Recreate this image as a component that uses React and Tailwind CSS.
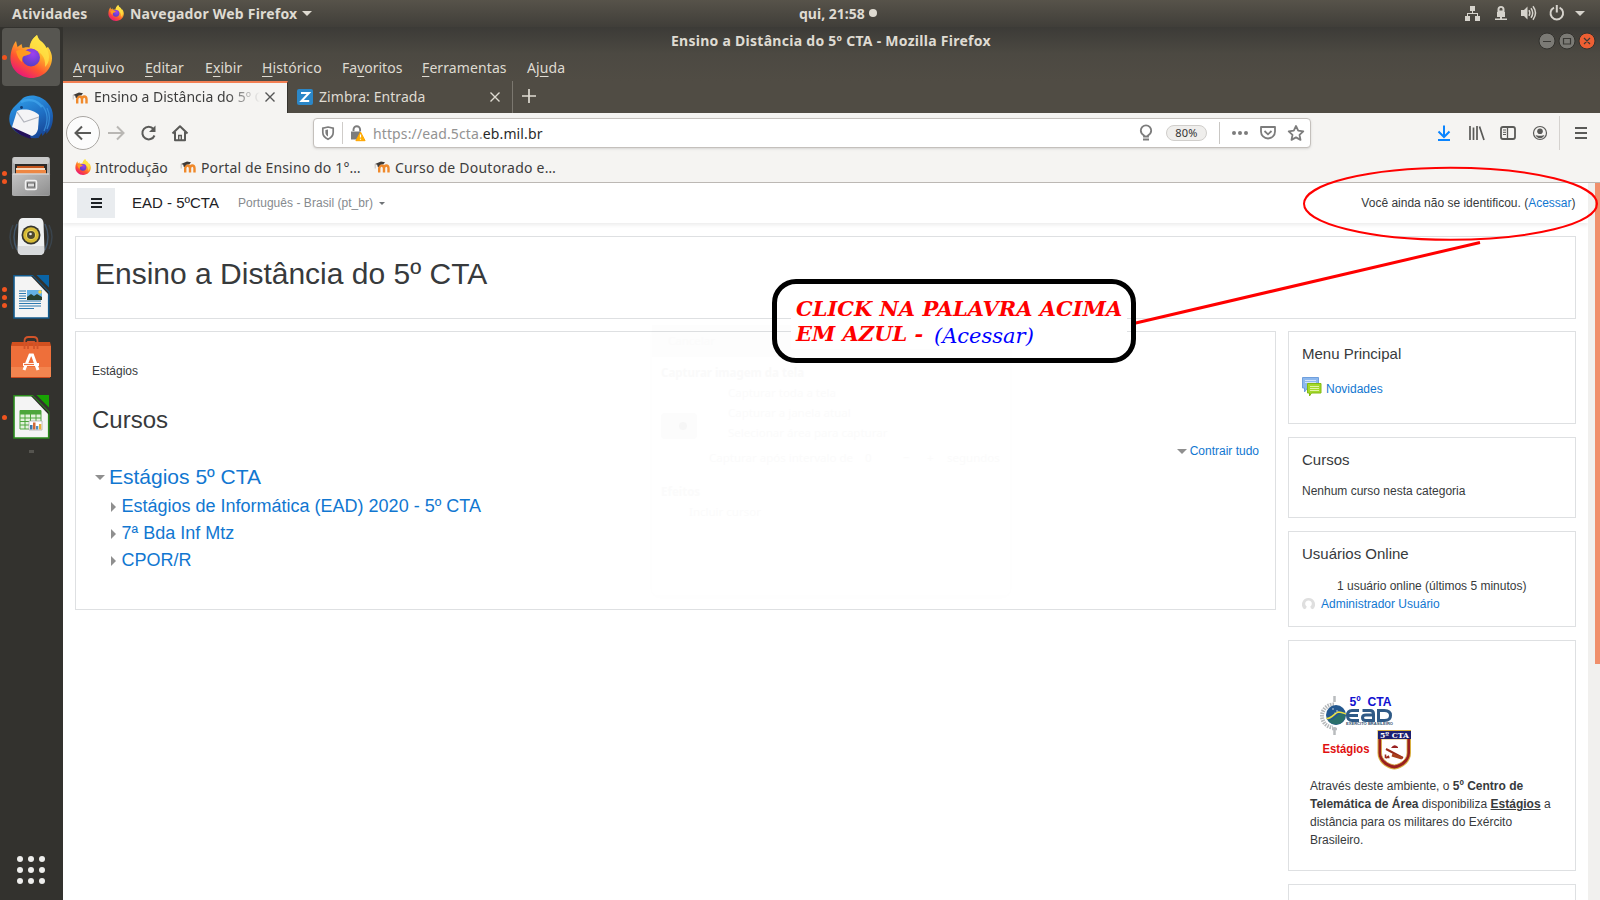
import React from "react";

const UI = "font-['Noto_Sans','Open_Sans',sans-serif]";

function Firefox({ className }) {
  return (
    <svg viewBox="0 0 42 43" className={className}>
      <defs>
        <linearGradient id="ffa" x1="0.85" y1="0.1" x2="0.3" y2="1">
          <stop offset="0" stopColor="#fff04a" />
          <stop offset="0.35" stopColor="#ffb52a" />
          <stop offset="0.68" stopColor="#ff5530" />
          <stop offset="1" stopColor="#e8157b" />
        </linearGradient>
        <radialGradient id="ffb" cx="0.6" cy="0.3" r="0.8">
          <stop offset="0" stopColor="#a040f0" />
          <stop offset="1" stopColor="#4a3fc0" />
        </radialGradient>
      </defs>
      <path
        d="M27 0c1 3 2 5 5 7 2 2 4 4 4 6l2-1c3 4 4 8 4 11 0 11-9 20-20.500 20S.5 34 .5 23.500C.5 16 3 10 6 6l1.500 6 4-3 1 4c3-1 4-1 7-.5C20 7 23 3 27 0z"
        fill="url(#ffa)"
      />
      <path d="M27 0c1 3 2 5 5 7 4 4 7 9 7 15 0 5-2 8-4 10 1-10-4-16-15-19 0-5 3-10 7-13z" fill="#ffe547" opacity="0.75" />
      <circle cx="21" cy="22.500" r="9" fill="url(#ffb)" />
      <path d="M6 16c4-2 9-2 15 1.500-1 2.500-4 2.500-7 3.500-2 1-2 4-2 6-3-2-5-6-6-11z" fill="#ff9a1f" />
    </svg>
  );
}

function Moodle() {
  return (
    <svg viewBox="0 0 16 16" className="h-4 w-4 shrink-0">
      <path d="M5.200 13.500V9M5.200 9.300q.2-2.800 2.400-2.800T10 9.300v4.200M10 9.300q.2-2.800 2.300-2.800t2.200 2.800v4.200" fill="none" stroke="#f0892b" strokeWidth="2.400" />
      <path d="M1 5 7 2.500l4 .7L9.200 5.500C6.800 5 5.500 6 4.800 8L3.500 7.500 3.300 5.800z" fill="#3f3b38" />
      <path d="M1.200 5v4.500" stroke="#b9b4ae" strokeWidth=".8" />
    </svg>
  );
}

function Caret({ className }) {
  return (
    <svg viewBox="0 0 10 5" className={className}>
      <path d="M0 0h10L5 5z" fill="currentColor" />
    </svg>
  );
}

function StatusIcons() {
  return (
    <svg viewBox="1460 0 130 27" className="h-[27px] w-[130px]" fill="#d6d3cc">
      <path d="M1470 6h5v5h-5zM1465 16h5v5h-5zM1475 16h5v5h-5zM1472 11h1v2h5v3h-1v-2h-9v2h-1v-3h5z" />
      <path d="M1497.500 12V9.500a3.500 3.500 0 0 1 7 0V12h.5v5h-3v1.500h5V20h-12v-1.500h5V17h-3v-5zM1499.500 9.200V10.500h3V9.200a1.500 1.500 0 0 0-3 0z" fillRule="evenodd" />
      <path d="M1521 10h3l3.500-3.500v13L1524 16h-3z" />
      <g fill="none" stroke="#d6d3cc" strokeWidth="1.500">
        <path d="M1529 10.200q1.700 2.800 0 5.600M1531 8.200q3.400 4.800 0 9.600M1533 6.300q5 6.700 0 13.400" />
        <path d="M1554 7.600a6.300 6.300 0 1 0 5.600 0" strokeWidth="1.900" />
        <path d="M1556.800 5v7.500" strokeWidth="2" />
      </g>
      <path d="M1575 11h10l-5 5z" />
    </svg>
  );
}

function Header() {
  return (
    <header className={`${UI} flex h-[27px] shrink-0 items-center bg-linear-to-b from-[#57534a] to-[#403e39] text-[14px] leading-[25px] font-bold text-[#dfdbd2]`}>
      <div className="w-[96px] pb-px pl-3 tracking-[0.2px] whitespace-nowrap">Atividades</div>
      <div className="flex w-[703px] items-center pl-3">
        <Firefox className="mb-px h-4 w-4" />
        <span className="ml-[6px] w-[172px] pb-px tracking-[0.2px] whitespace-nowrap">Navegador Web Firefox</span>
        <Caret className="h-[5px] w-[10px]" />
      </div>
      <div className="flex w-[661px] items-center pb-px">
        <span className="w-[70px] whitespace-nowrap">qui, 21:58</span>
        <span className="h-2 w-2 rounded-full bg-[#dfdbd2]" />
      </div>
      <StatusIcons />
    </header>
  );
}

function Dots({ n }) {
  return (
    <div className="flex w-[9px] flex-col items-center gap-[3px]">
      {Array.from({ length: n }, (_, i) => (
        <span key={i} className="h-[5px] w-[5px] rounded-full bg-[#f0541f]" />
      ))}
    </div>
  );
}

function Thunderbird() {
  return (
    <svg viewBox="0 0 44 44" className="h-11 w-11">
      <defs>
        <linearGradient id="tb" x1="0.3" y1="0" x2="0.8" y2="1">
          <stop offset="0" stopColor="#2f9be6" />
          <stop offset="0.5" stopColor="#1f6fc4" />
          <stop offset="1" stopColor="#16408f" />
        </linearGradient>
      </defs>
      <path d="M14 3C17 1 22 0 27 1c10 2 17 11 17 20 0 8-2 14-7 18l.5-3-4 5-1-3-3 5C18 44 5 39 1 29c-2-7 0-14 6-19z" fill="url(#tb)" />
      <path d="M12 7C19 3 28 5 33 12" fill="none" stroke="#45a8ee" strokeWidth="2.500" opacity=".7" />
      <path d="M3 31c3 6 9 10 19 13l-2-7z" fill="#24105a" />
      <path d="M8 16c7-3 17-1 22 4l-1 14c-1 4-3 6-6 7L3 32z" fill="#f4f4f6" />
      <path d="M8 17l7 10 15-5" fill="none" stroke="#b4b6be" strokeWidth="1.300" />
      <path d="M33 10c6 7 7 15 2 26M38 13c3 6 3 14 0 21" fill="none" stroke="#3f9be4" strokeWidth="1.300" opacity=".7" />
      <circle cx="12.500" cy="12.500" r="1.400" fill="#123a70" />
    </svg>
  );
}

function Files() {
  return (
    <svg viewBox="0 0 40 42" className="h-[42px] w-10">
      <defs>
        <linearGradient id="fl" x1="0" y1="0" x2="1" y2="1">
          <stop offset="0" stopColor="#c4c4c4" />
          <stop offset="1" stopColor="#8e8e8e" />
        </linearGradient>
      </defs>
      <rect x="1" y="1" width="38" height="39" rx="2.500" fill="#a9a9a9" />
      <rect x="2" y="1" width="36" height="7" rx="2" fill="#c9c9c9" />
      <rect x="4" y="8" width="32" height="11" fill="#2c2a28" />
      <path d="M6 10h27v8H6z" fill="#c4541c" />
      <path d="M5 12h29v2H5z" fill="#f6dcc0" />
      <path d="M5 14h30v5H5z" fill="#ee8742" />
      <rect x="1" y="17.500" width="38" height="22" rx="1" fill="url(#fl)" />
      <path d="M2 18h36" stroke="#e2e2e2" />
      <rect x="14.500" y="24.500" width="11" height="9" rx="1.500" fill="none" stroke="#f2f2f2" strokeWidth="1.500" />
      <rect x="16.500" y="27" width="7" height="4" fill="#ddd" stroke="#666" />
    </svg>
  );
}

function Speaker() {
  return (
    <svg viewBox="0 0 46 44" className="h-11 w-[46px]">
      <g fill="none" stroke="#42566a" strokeWidth="1.500">
        <path d="M9 9Q3 22 9 35M37 9q6 13 0 26" />
        <path d="M5 10Q-1 22 5 34M41 10q6 12 0 24" opacity=".5" />
      </g>
      <path d="M15 3h16q4 0 4.500 5l1 27q0 5-5 5h-17q-5 0-5-5l1-27Q11 3 15 3z" fill="#eef0f1" />
      <path d="M10 31h26v5q0 4-5 4H15q-5 0-5-4z" fill="#d8dadc" />
      <circle cx="23" cy="20" r="9.500" fill="#35352f" />
      <circle cx="23" cy="20" r="7.800" fill="#d7bb35" />
      <circle cx="23" cy="20" r="5" fill="#edd75c" />
      <circle cx="23" cy="20" r="4" fill="#4f4a2e" />
      <circle cx="22.500" cy="19" r="1.300" fill="#eee" />
    </svg>
  );
}

function Doc({ color, dark, children }) {
  return (
    <svg viewBox="0 0 37 44" className="h-11 w-[37px]">
      <path d="M1 .8h18.500L35.700 17v26H1z" fill="#f4f4f4" stroke={dark} strokeWidth="1.600" />
      <path d="M19.500 1 35.500 17l.5 3L18 1z" fill="#2c2b28" />
      <path d="M23.500 0H36v12.500z" fill={color} />
      {children}
    </svg>
  );
}

function Dock() {
  const slot = "flex h-[60px] w-[63px] items-center";
  return (
    <aside className="flex h-[873px] w-[63px] shrink-0 flex-col bg-[#33322e]">
      <div className={slot}>
        <div className="ml-[2px] flex h-[58px] w-[58px] items-center rounded-[4px] bg-[#575651]">
          <span className="h-[5px] w-[5px] rounded-full bg-[#f0541f]" />
          <Firefox className="mb-[2px] ml-[3px] h-[43px] w-[42px]" />
        </div>
      </div>
      <div className={slot}><Dots n={0} /><div className="mb-px"><Thunderbird /></div></div>
      <div className={slot}><Dots n={2} /><div className="ml-[2px]"><Files /></div></div>
      <div className={slot}><Dots n={0} /><div className="-ml-px"><Speaker /></div></div>
      <div className={slot}>
        <Dots n={3} />
        <div className="ml-1">
          <Doc color="#0a64a6" dark="#125a8c">
            <path d="M6 16h7M6 18.500h7M6 21h7M6 23.500h7M6 26h22M6 28.500h22M6 31h22M6 33.500h15" stroke="#2d7ab0" strokeWidth="1.100" />
            <path d="M14 15h15v10H14z" fill="#64b1e4" />
            <path d="M14 25v-3l4-3 3 2 3-2 5 3v3z" fill="#28402f" />
            <circle cx="27" cy="17" r="1.700" fill="#f7d23a" />
          </Doc>
        </div>
      </div>
      <div className={slot}>
        <svg viewBox="0 0 42 44" className="ml-[10px] h-11 w-[42px]">
          <path d="M3 8h36l1 35H1z" fill="#c9481d" />
          <path d="M1 11h40v31H1z" fill="#ee6f3a" />
          <path d="M1 32h40v10H1z" fill="#f3854f" />
          <path d="M2 7h38l1 4H1z" fill="#d2501f" />
          <path d="M14.500 14V6q0-4 4-4h5q4 0 4 4v8M18 14V7h6v7" fill="none" stroke="#d2542a" strokeWidth="1.800" />
          <path d="M14 35 20 20h2.500L28 35M13 29.500h16" fill="none" stroke="#fff" strokeWidth="3" />
          <path d="M14 29.500h10" stroke="#ee6f3a" strokeWidth="1.200" />
        </svg>
      </div>
      <div className={slot}>
        <Dots n={1} />
        <div className="ml-1">
          <Doc color="#18a303" dark="#2a8a1c">
            <path d="M7 15.500h21V34H7z" fill="#e3f2dc" />
            <path d="M7 16h21v3H7z" fill="#4da63c" />
            <path d="M7 15.500h21V34H7zM7 19h21M7 23h21M7 26.500h21M7 30h21M12 15.500V34M17.500 15.500V34M23 15.500V34" fill="none" stroke="#4da63c" />
            <path d="M16 26h13v9H16z" fill="#fff" stroke="#a5a5a5" strokeWidth=".7" />
            <path d="M17 30h2.500v4.500H17z" fill="#3c78a8" />
            <path d="M20 27.500h2.500v7H20z" fill="#cf6b38" />
            <path d="M23 31h2.300v3.500H23z" fill="#4a90c0" />
            <path d="M26 29h2.300v5.500H26z" fill="#e9b13a" />
          </Doc>
        </div>
      </div>
      <div className="mx-auto mt-[3px] h-[3px] w-[5px] bg-[#55544f]" />
      <div className="mt-auto mb-4 ml-[17px] grid w-7 grid-cols-3 gap-[5px]">
        {Array.from({ length: 9 }, (_, i) => (
          <span key={i} className="h-[6px] w-[6px] rounded-full bg-[#eeeeec]" />
        ))}
      </div>
    </aside>
  );
}

function WindowChrome() {
  const u = "underline underline-offset-[3px] decoration-1";
  return (
    <div className="flex h-[54px] shrink-0 flex-col bg-linear-to-b from-[#3c3b37] via-[#4c4942] to-[#504c44]">
      <div className="flex h-[27px] items-center">
        <div className="flex-1 pl-[608px] text-[14px] leading-[27px] font-bold tracking-[0.27px] whitespace-nowrap text-[#dfdbd2]">
          Ensino a Distância do 5º CTA - Mozilla Firefox
        </div>
        <svg viewBox="0 0 60 20" className="mr-[2px] h-5 w-[60px]">
          <g stroke="#32312d">
            <circle cx="9" cy="10" r="8" fill="#7b7a75" />
            <circle cx="29" cy="10" r="8" fill="#7b7a75" />
            <circle cx="49" cy="10" r="8" fill="#ed5f33" />
          </g>
          <path d="M5 10.500h8M25.500 7.500h7v5.500h-7zM46 7l6 6M52 7l-6 6" fill="none" stroke="#3a3935" strokeWidth="1.200" />
        </svg>
      </div>
      <nav className="flex h-[27px] items-center pl-[10px] text-[14px] leading-[27px] whitespace-nowrap text-[#dfdbd2]">
        <span className="w-[72px] tracking-[0.1px]"><u className={u}>A</u>rquivo</span>
        <span className="w-[60px]"><u className={u}>E</u>ditar</span>
        <span className="w-[57px] tracking-[0.1px]">E<u className={u}>x</u>ibir</span>
        <span className="w-[80px] tracking-[0.1px]"><u className={u}>H</u>istórico</span>
        <span className="w-[80px]">Fa<u className={u}>v</u>oritos</span>
        <span className="w-[105px] tracking-[0.1px]"><u className={u}>F</u>erramentas</span>
        <span className="tracking-[0.1px]">Aj<u className={u}>u</u>da</span>
      </nav>
    </div>
  );
}

function Close({ className }) {
  return (
    <svg viewBox="0 0 10 10" className={className}>
      <path d="M.5.5l9 9M9.500.5l-9 9" stroke="currentColor" strokeWidth="1.400" />
    </svg>
  );
}

function Tabs() {
  return (
    <div className="flex h-8 shrink-0 bg-[#504c44] text-[14px]">
      <div className="flex w-[225px] items-center border-t-2 border-r border-t-[#f37f53] border-r-[#35332e] bg-[#f5f4f2] pl-[9px] text-[#3d3d3d]">
        <Moodle />
        <span className="ml-[6px] w-[166px] overflow-hidden mask-r-from-80% pb-[3px] whitespace-nowrap">Ensino a Distância do 5º CTA</span>
        <Close className="mb-[3px] ml-[5px] h-[10px] w-[10px] text-[#555]" />
      </div>
      <div className="flex w-[225px] items-center border-r border-[#7b776f] pl-[9px] text-[#dfdbd2]">
        <svg viewBox="0 0 16 16" className="h-4 w-4">
          <rect width="16" height="16" rx="2" fill="#2b87c8" />
          <path d="M4 4h8L4.500 12H12.200" fill="none" stroke="#fff" strokeWidth="2" />
        </svg>
        <span className="ml-[6px] w-[171px] pb-[2px] tracking-[0.07px]">Zimbra: Entrada</span>
        <Close className="h-[10px] w-[10px]" />
      </div>
      <svg viewBox="0 0 14 14" className="mt-2 ml-[9px] h-[14px] w-[14px]">
        <path d="M7 0v14M0 7h14" stroke="#dfdbd2" strokeWidth="1.700" />
      </svg>
    </div>
  );
}

function Toolbar() {
  return (
    <div className="flex h-[39px] shrink-0 items-center bg-[#f5f4f2]">
      <svg viewBox="63 113 250 39" className="h-[39px] w-[250px]" fill="none" stroke="#5a5a58" strokeWidth="2">
        <circle cx="83" cy="133" r="16.500" fill="#fcfcfc" stroke="#a9a6a2" strokeWidth="1" />
        <path d="M91 133H76M82 126.500l-6.500 6.500 6.500 6.500" />
        <path d="M108 133h15M117 126.500l6.500 6.500-6.500 6.500" stroke="#b9b7b4" />
        <path d="M153.500 129a6.300 6.300 0 1 0 1 6.500" />
        <path d="M155.500 125.500v6.500h-6.500z" fill="#5a5a58" stroke="none" />
        <path d="M172.500 133.500l7.500-7.300 7.500 7.300M175 132v8.200h10V132" strokeLinejoin="round" />
        <path d="M178.700 140v-4.500h2.600V140" strokeWidth="1.400" />
      </svg>
      <div className="mt-[1px] flex h-[30px] w-[998px] items-center rounded-[4px] border border-[#c4c0bc] bg-white shadow-sm">
        <svg viewBox="314 119 56 28" className="h-7 w-14" fill="none" stroke="#7c7c7c" strokeWidth="1.700">
          <path d="M328 127l5.200 1.200v4.300c0 3.300-2.200 5.300-5.200 6.700-3-1.400-5.200-3.400-5.200-6.700v-4.300z" />
          <path d="M328 129.500v7c-1.700-1-2.600-2.300-2.600-4v-2.400z" fill="#7c7c7c" stroke="none" />
          <path d="M342.500 122v22" stroke="#cfccc9" strokeWidth="1" />
          <path d="M353.500 131v-1.500a3.300 3.300 0 0 1 6.600 0v2" strokeWidth="1.900" />
          <path d="M351 131.500h9v8h-9z" fill="#7c7c7c" stroke="none" />
          <path d="M360.500 132l4.600 8.700h-9.200z" fill="#ffb000" stroke="#ffa400" strokeWidth="1" strokeLinejoin="round" />
          <path d="M360.500 134.500v3M360.500 138.700v1" stroke="#fff" strokeWidth="1.200" />
        </svg>
        <span className="ml-[3px] w-[754px] text-[14px] tracking-[0.12px] text-[#939393]">
          https://ead.5cta.<span className="text-[#2a2a2a]">eb.mil.br</span>
        </span>
        <svg viewBox="0 0 14 18" className="ml-[12px] h-[18px] w-[14px]" fill="none" stroke="#7c7c7c" strokeWidth="1.800">
          <path d="M5 12.500V11.500C3 10.300 1.800 8.600 1.800 6.500a5.200 5.200 0 0 1 10.400 0c0 2.100-1.200 3.800-3.200 5v1zM4 15.500h6" />
        </svg>
        <span className="ml-[13px] flex h-4 w-[41px] items-center justify-center rounded-full border border-[#d0cecb] bg-[#efeeec] pb-px text-[11px] leading-none tracking-[0.2px] text-[#333]">80%</span>
        <span className="ml-3 h-[22px] w-px bg-[#c9c7c4]" />
        <svg viewBox="1230 120 76 26" className="ml-[10px] h-[26px] w-[76px]" fill="none" stroke="#7c7c7c" strokeWidth="1.800">
          <g fill="#7c7c7c" stroke="none">
            <circle cx="1234" cy="133" r="2" /><circle cx="1240" cy="133" r="2" /><circle cx="1246" cy="133" r="2" />
          </g>
          <path d="M1261 127h14v4.500a7 7 0 0 1-14 0z" strokeLinejoin="round" />
          <path d="M1264.500 131l3.500 3.300 3.500-3.300" />
          <path d="M1296 126l2.200 4.700 5.100.6-3.800 3.500 1 5.100-4.500-2.500-4.500 2.500 1-5.100-3.800-3.500 5.100-.6z" strokeLinejoin="round" />
        </svg>
      </div>
      <svg viewBox="1311 113 289 39" className="h-[39px] w-[289px]" fill="none" stroke="#5a5a58" strokeWidth="2">
        <path d="M1444 125.500v11.500M1438.500 131.500l5.500 5.500 5.500-5.500M1438 140h12" stroke="#0a84ff" />
        <path d="M1470 126v14M1473.500 127.500V140M1477 126v14M1479.500 126.500l4.500 13.500" strokeWidth="1.700" />
        <rect x="1501" y="127" width="14" height="12" rx="2" strokeWidth="1.800" />
        <path d="M1507.500 127v12" strokeWidth="1.300" />
        <path d="M1503 130h3M1503 132.300h3M1503 134.500h3" strokeWidth="1" />
        <circle cx="1540" cy="133" r="6.500" strokeWidth="1.200" />
        <circle cx="1540" cy="131.300" r="2.800" fill="#5a5a58" stroke="none" />
        <path d="M1535.500 135c1.500 1 7.500 1 9 0a4.800 4.800 0 0 1-9 0z" fill="#5a5a58" stroke="none" />
        <path d="M1559.500 116v34" stroke="#d5d2cf" strokeWidth="1" />
        <path d="M1575 128h12M1575 133h12M1575 138h12" strokeWidth="1.800" />
      </svg>
    </div>
  );
}

function Bookmarks() {
  return (
    <div className="flex h-[31px] shrink-0 items-center border-b border-[#bcb8b4] bg-[#f5f4f2] pl-3 text-[14px] whitespace-nowrap text-[#3d3d3d]">
      <Firefox className="h-4 w-4" />
      <span className="ml-1 w-[85px]">Introdução</span>
      <Moodle />
      <span className="ml-[5px] w-[173px] tracking-[0.15px]">Portal de Ensino do 1°…</span>
      <Moodle />
      <span className="ml-[5px] tracking-[0.23px]">Curso de Doutorado e…</span>
    </div>
  );
}

const card = "border border-[#dee0e2] bg-white";
const link = "text-[#1177d1]";

function Navbar() {
  return (
    <div className="flex h-10 w-[1525px] shrink-0 items-center bg-white pl-[14px] shadow-[0_2px_4px_rgba(0,0,0,0.08)]">
      <div className="flex h-[30px] w-[38px] items-center justify-center bg-[#e9ecef]">
        <svg viewBox="0 0 11 10" className="h-[10px] w-[11px]">
          <path d="M0 1h11M0 5h11M0 9h11" stroke="#1d2125" strokeWidth="1.800" />
        </svg>
      </div>
      <span className="ml-[17px] w-[106px] pt-px text-[15px] text-[#1d2125]">EAD - 5ºCTA</span>
      <span className="text-[12px] tracking-[0.04px] text-[#868a8e]">Português - Brasil (pt_br)</span>
      <Caret className="ml-[6px] h-[3px] w-[6px] text-[#6f7376]" />
      <span className="ml-auto pr-[12.500px] text-[12px]">
        Você ainda não se identificou. (<a className={link}>Acessar</a>)
      </span>
    </div>
  );
}

function SubCourse({ children }) {
  return (
    <div className="flex h-[27px] items-center">
      <svg viewBox="0 0 5 10" className="mr-[5.500px] h-[10px] w-[5px]"><path d="M0 0l5 5-5 5z" fill="#8f8f8f" /></svg>
      <a className={`text-[18px] leading-[27px] ${link}`}>{children}</a>
    </div>
  );
}

function Courses() {
  return (
    <section className={`${card} h-[279px] w-[1201px] px-4`}>
      <p className="mt-[30px] text-[12px] leading-[18px]">Estágios</p>
      <h2 className="mt-[26px] text-[24px] leading-7">Cursos</h2>
      <div className="mt-[8px] flex h-[18px] items-center justify-end text-[12px]">
        <Caret className="mr-[3px] h-[5px] w-[10px] text-[#8f8f8f]" />
        <a className={link}>Contrair tudo</a>
      </div>
      <div className="mt-[4px] flex h-[26px] items-center pl-[3px]">
        <Caret className="mr-[4px] h-[5px] w-[10px] text-[#8f8f8f]" />
        <a className={`text-[21px] ${link}`}>Estágios 5º CTA</a>
      </div>
      <div className="mt-[3px] pl-[19px]">
        <SubCourse>Estágios de Informática (EAD) 2020 - 5º CTA</SubCourse>
        <SubCourse>7ª Bda Inf Mtz</SubCourse>
        <SubCourse>CPOR/R</SubCourse>
      </div>
    </section>
  );
}

function EadLogo() {
  return (
    <svg viewBox="1318 692 96 80" className="h-20 w-24">
      <path d="M1334 704.500a11.500 11.500 0 0 0-1 23" fill="none" stroke="#b5b8ba" strokeWidth="4" strokeDasharray="1.500 1" />
      <path d="M1334.500 696v6M1334.500 727v8M1332 729h5" stroke="#b9bcbe" strokeWidth="2.500" />
      <circle cx="1336" cy="715" r="10" fill="#24588f" />
      <path d="M1328 720.500c5 0 8-4 11-6 3-1 5 0 6.500 1-1 6-5 9-9.500 9-3 0-6-1.500-8-4z" fill="#2a6f6a" />
      <path d="M1326.500 718.500c6 0 8-6 12-6.500 3 0 5 1 7.500 2" fill="none" stroke="#e8de3c" strokeWidth="1.600" />
      <g fill="#fff"><circle cx="1333" cy="709" r=".7" /><circle cx="1337" cy="711" r=".7" /><circle cx="1335" cy="713" r=".6" /></g>
      <g fill="none" stroke="#2f5a86" strokeWidth="3">
        <path d="M1359 710.500h-7q-4.500 0-4.500 5t4.500 5h7M1348 715.500h10" />
        <path d="M1362.500 710.500h7.500q3.500 0 3.500 3.500v6.500h-7.500q-3.500 0-3.500-2.700t3.500-2.700h7.500" />
        <path d="M1378.500 709v11.500h6q6 0 6-5t-6-5H1377" />
      </g>
      <text x="1346" y="725.300" textLength="47" lengthAdjust="spacingAndGlyphs" fontSize="4" fontWeight="bold" fontFamily="Liberation Sans" fill="#33506e">EXÉRCITO BRASILEIRO</text>
      <text x="1349.500" y="706" textLength="42" lengthAdjust="spacingAndGlyphs" fontSize="12" fontWeight="bold" fontFamily="Liberation Sans" fill="#1010d0" xmlSpace="preserve">5º  CTA</text>
      <text x="1322.500" y="752.500" textLength="47" lengthAdjust="spacingAndGlyphs" fontSize="12" fontWeight="bold" fontFamily="Liberation Sans" fill="#e01010">Estágios</text>
      <path d="M1377.500 730h33.500v23c0 9-8 15.500-16.700 16.500-8.800-1-16.800-7.500-16.800-16.500z" fill="#d8b040" />
      <path d="M1378.500 731h31.500v22c0 8-7.500 14.500-15.700 15.500-8.300-1-15.800-7.500-15.800-15.500z" fill="#9a2020" />
      <path d="M1381.500 739h25.500v14c0 6.500-6.500 11-12.700 12-6.300-1-12.800-5.500-12.800-12z" fill="#fff" stroke="#d8b040" strokeWidth=".8" />
      <path d="M1378 731h33v8h-33z" fill="#1c2070" />
      <text x="1380" y="738" textLength="29" lengthAdjust="spacingAndGlyphs" fontSize="8" fontWeight="bold" fontFamily="DejaVu Serif" fill="#fff">5º CTA</text>
      <path d="M1386 749l17 9" stroke="#9a2a1a" strokeWidth="2" />
      <path d="M1392 755l10 3" stroke="#a8401c" strokeWidth="3" />
      <path d="M1385.500 754.500v3h4M1386 758l3-2" fill="none" stroke="#9a2a1a" strokeWidth="1.600" />
      <path d="M1391 748q3-5 7-1v1z" fill="#9a2020" />
    </svg>
  );
}

function Sidebar() {
  const h = "text-[15px] leading-[18px]";
  return (
    <aside className="flex w-[288px] flex-col gap-[13px] text-[12px] leading-[18px]">
      <section className={`${card} h-[93px] px-[13px] pt-[13px]`}>
        <h3 className={h}>Menu Principal</h3>
        <div className="mt-[14px] flex h-5 items-start">
          <svg viewBox="0 0 20 20" className="h-5 w-5">
            <path d="M.5.500h16v10.500H5.500L2.500 15V11h-2z" fill="#8db8ee" stroke="#6f9fdd" />
            <path d="M3 3.500h11M3 5.500h11" stroke="#d3e4fa" />
            <path d="M5.500 6.500h13.500v9.500H9.500L7.500 19v-3h-2z" fill="#a4d82b" stroke="#83bb12" />
            <path d="M8 9.500h9M8 11.500h9M8 13.500h9" stroke="#e2f5a8" />
          </svg>
          <a className={`mt-[3px] ml-1 ${link}`}>Novidades</a>
        </div>
      </section>
      <section className={`${card} h-[81px] px-[13px] pt-[13px]`}>
        <h3 className={h}>Cursos</h3>
        <p className="mt-[13px]">Nenhum curso nesta categoria</p>
      </section>
      <section className={`${card} h-[96px] px-[13px] pt-[13px]`}>
        <h3 className={h}>Usuários Online</h3>
        <p className="mt-[14px] pl-[35px]">1 usuário online (últimos 5 minutos)</p>
        <div className="flex items-center">
          <svg viewBox="0 0 13 13" className="mr-[6px] h-[13px] w-[13px]">
            <path d="M6.500 0A6.500 6.500 0 0 1 11 11.200L9 10.500 8.300 8.500a3.300 3.300 0 1 0-3.600 0L4 10.500l-2 .7A6.500 6.500 0 0 1 6.500 0z" fill="#dfdfdf" />
          </svg>
          <a className={link}>Administrador Usuário</a>
        </div>
      </section>
      <section className={`${card} h-[231px] pt-[51px] pl-[21px]`}>
        <div className="ml-[8px] h-[85px]"><EadLogo /></div>
        <p className="w-[250px]">
          Através deste ambiente, o <b>5º Centro de Telemática de Área</b> disponibiliza <b className="underline">Estágios</b> a distância para os militares do Exército Brasileiro.
        </p>
      </section>
      <section className={`${card} h-[30px]`} />
    </aside>
  );
}

function GhostDialog() {
  return (
    <div className={`${UI} absolute top-[325px] left-[652px] h-[270px] w-[358px] rounded-md text-[11.500px] leading-5 whitespace-nowrap text-[#fbfbfb] shadow-[0_2px_9px_rgba(0,0,0,0.012)]`}>
      <div className="h-8 bg-black/[0.008] pl-4 leading-8">Cancelar</div>
      <div className="pt-[6px] pl-[9px] font-bold text-[#fafafa]">Capturar imagem da tela</div>
      <div className="flex">
        <div className="mt-[30px] ml-[9px] flex h-[26px] w-9 items-center justify-center rounded bg-[#fcfcfc]">
          <span className="ml-2 h-2 w-2 rounded-full bg-[#f6f6f6]" />
        </div>
        <div className="ml-[31px]">
          <div>Capturar toda a tela</div>
          <div>Capturar a janela atual</div>
          <div>Selecionar área para capturar</div>
        </div>
      </div>
      <div className="mt-[5px] flex pl-[57px]">
        <span className="w-[156px]">Capturar após intervalo de</span>
        <span className="w-[38px]">0</span><span className="w-[24px]">−</span><span className="w-[20px]">+</span>
        <span>segundos</span>
      </div>
      <div className="mt-[14px] pl-[9px] font-bold">Efeitos</div>
      <div className="pl-[37px]">Incluir cursor</div>
    </div>
  );
}

function Annotations() {
  return (
    <>
      <svg viewBox="0 0 1600 900" className="pointer-events-none absolute top-0 left-0 h-[900px] w-[1600px]" fill="none" stroke="#ff0000">
        <ellipse cx="1450.500" cy="203.800" rx="146.500" ry="36" strokeWidth="2" />
        <path d="M1131.500 324 1480 242.500" strokeWidth="3" />
      </svg>
      <div className="absolute top-[279px] left-[772px] h-[84px] w-[364px] rounded-[24px] border-[5px] border-black px-[14px] pt-[12px]">
        <div className="h-[53px] w-[336px] bg-white pl-[5px] font-['DejaVu_Serif',serif] whitespace-nowrap">
          <div className="text-[21px] leading-[25px] font-bold text-[#ff0000] italic">CLICK NA PALAVRA ACIMA</div>
          <div className="flex text-[21px] leading-[25px] italic">
            <span className="w-[138px] font-bold text-[#ff0000]">EM AZUL -</span>
            <span className="pt-[3px] text-[#0000ff]">(Acessar)</span>
          </div>
        </div>
      </div>
    </>
  );
}

export default function App() {
  return (
    <div className="relative flex h-[900px] w-[1600px] flex-col overflow-hidden bg-white">
      <Header />
      <div className="flex">
        <Dock />
        <div className="flex h-[873px] w-[1537px] flex-col">
          <div className={`${UI} flex flex-col`}>
            <WindowChrome />
            <Tabs />
            <Toolbar />
            <Bookmarks />
          </div>
          <div className="flex min-h-0 flex-1 bg-[#f1f0ee] font-['Liberation_Sans',Arial,sans-serif] text-[#373a3c]">
            <main className="flex w-[1525px] flex-col overflow-hidden bg-white">
              <Navbar />
              <div className="pt-[13px] pl-3">
                <section className={`${card} h-[83px] w-[1501px] pt-[19px] pl-[19px]`}>
                  <h1 className="text-[30px] leading-9">Ensino a Distância do 5º CTA</h1>
                </section>
                <div className="mt-3 flex items-start gap-3">
                  <Courses />
                  <Sidebar />
                </div>
              </div>
            </main>
            <div className="ml-auto h-[481px] w-[5px] bg-[#f08f6b]" />
          </div>
        </div>
      </div>
      <GhostDialog />
      <Annotations />
    </div>
  );
}
